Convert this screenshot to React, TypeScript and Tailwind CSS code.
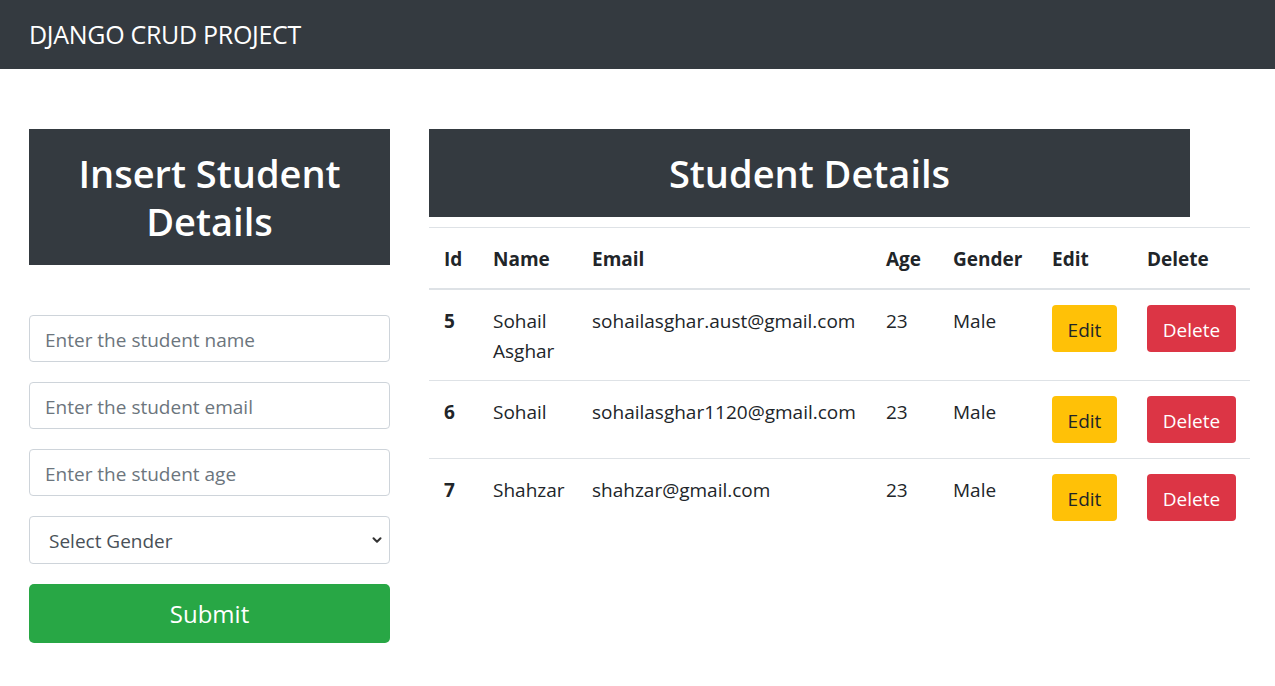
import { ChevronDown } from "lucide-react";

type Student = { id: number; name: string; email: string; age: number; gender: string };

const students: Student[] = [
  { id: 5, name: "Sohail Asghar", email: "sohailasghar.aust@gmail.com", age: 23, gender: "Male" },
  { id: 6, name: "Sohail", email: "sohailasghar1120@gmail.com", age: 23, gender: "Male" },
  { id: 7, name: "Shahzar", email: "shahzar@gmail.com", age: 23, gender: "Male" },
];

const font = { fontFamily: '"Open Sans", "Noto Sans", sans-serif' };

export default function App() {
  return (
    <div className="min-h-screen bg-white text-[#212529] text-[20px] leading-[1.5]" style={font}>
      {/* Navbar */}
      <nav className="flex h-[69px] items-center bg-[#343a40] px-[29px]">
        <span className="text-[25px] tracking-[-0.3px] text-white">DJANGO CRUD PROJECT</span>
      </nav>

      <div className="flex gap-[39px] pl-[29px] pr-[25px] pt-[60px]">
        {/* Left — form */}
        <div className="flex w-[361px] shrink-0 flex-col">
          <div className="bg-[#343a40] px-4 py-[20px] text-center">
            <h2 className="text-[38px] font-semibold leading-[48px] text-white">Insert Student Details</h2>
          </div>

          <form className="mt-[50px] flex flex-col gap-[20px]">
            <input
              placeholder="Enter the student name"
              className="h-[47px] rounded-[4px] border border-[#ced4da] px-[15px] pt-[2px] text-[19px] placeholder:text-[#6c757d] outline-none"
            />
            <input
              placeholder="Enter the student email"
              className="h-[47px] rounded-[4px] border border-[#ced4da] px-[15px] pt-[2px] text-[19px] placeholder:text-[#6c757d] outline-none"
            />
            <input
              placeholder="Enter the student age"
              className="h-[47px] rounded-[4px] border border-[#ced4da] px-[15px] pt-[2px] text-[19px] placeholder:text-[#6c757d] outline-none"
            />
            <div className="relative">
              <select className="h-[48px] w-full appearance-none rounded-[4px] border border-[#ced4da] bg-white pl-[19px] pt-[2px] text-[19px] text-[#495057] outline-none">
                <option>Select Gender</option>
                <option>Male</option>
                <option>Female</option>
              </select>
              <ChevronDown
                className="pointer-events-none absolute right-[6px] top-[17px] h-[14px] w-[14px] text-[#333]"
                strokeWidth={3.5}
              />
            </div>
            <button
              type="button"
              className="h-[59px] rounded-[5px] bg-[#28a745] text-[24px] text-white"
            >
              Submit
            </button>
          </form>
        </div>

        {/* Right — table */}
        <div className="flex flex-1 flex-col">
          <div className="w-[761px] bg-[#343a40] py-[20px] text-center">
            <h2 className="text-[38px] font-semibold leading-[48px] text-white">Student Details</h2>
          </div>

          <table className="mt-[10px] w-full table-fixed border-collapse text-left">
            <colgroup>
              <col className="w-[49px]" />
              <col className="w-[99px]" />
              <col className="w-[294px]" />
              <col className="w-[67px]" />
              <col className="w-[99px]" />
              <col className="w-[95px]" />
              <col />
            </colgroup>
            <thead>
              <tr className="border-t border-[#dee2e6]">
                {["Id", "Name", "Email", "Age", "Gender", "Edit", "Delete"].map((h) => (
                  <th
                    key={h}
                    className="border-b-2 border-[#dee2e6] px-[15px] pb-[14px] pt-[16px] text-[19px] font-bold leading-[30px]"
                  >
                    {h}
                  </th>
                ))}
              </tr>
            </thead>
            <tbody>
              {students.map((s) => (
                <tr key={s.id} className="border-t border-[#dee2e6] align-top first:border-t-0">
                  <td className="px-[15px] pb-[14px] pt-[16px] text-[19px] font-bold leading-[30px]">{s.id}</td>
                  <td className="px-[15px] pb-[14px] pt-[16px] text-[19px] leading-[30px]">{s.name}</td>
                  <td className="whitespace-nowrap px-[15px] pb-[14px] pt-[16px] text-[19px] leading-[30px]">{s.email}</td>
                  <td className="px-[15px] pb-[14px] pt-[16px] text-[19px] leading-[30px]">{s.age}</td>
                  <td className="px-[15px] pb-[14px] pt-[16px] text-[19px] leading-[30px]">{s.gender}</td>
                  <td className="p-[15px]">
                    <button className="h-[47px] w-[65px] rounded-[4px] bg-[#ffc107] pt-[3px] text-[19px] text-[#212529]">
                      Edit
                    </button>
                  </td>
                  <td className="p-[15px]">
                    <button className="h-[47px] w-[89px] rounded-[4px] bg-[#dc3545] pt-[3px] text-[19px] text-white">
                      Delete
                    </button>
                  </td>
                </tr>
              ))}
            </tbody>
          </table>
        </div>
      </div>
    </div>
  );
}
